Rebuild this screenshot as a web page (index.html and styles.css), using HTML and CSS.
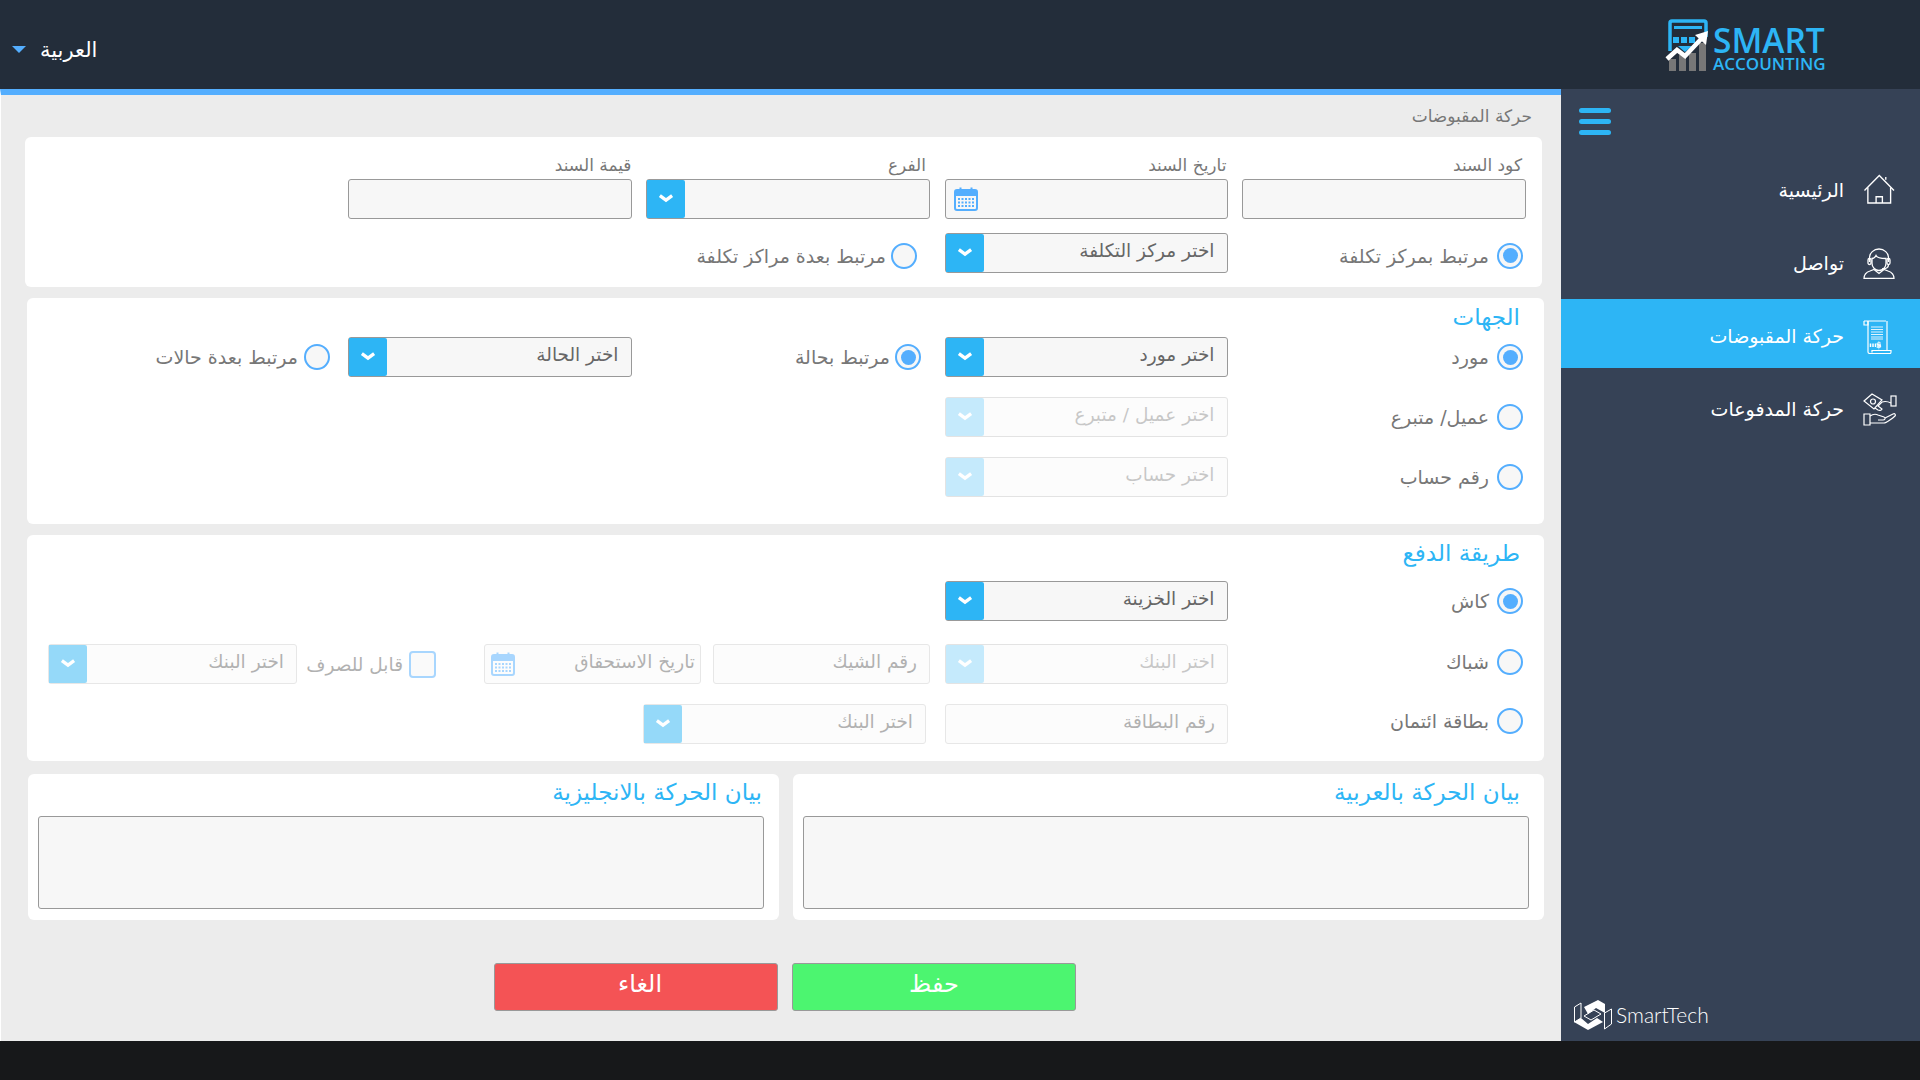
FILE: index.html
```html
<!DOCTYPE html>
<html lang="ar" dir="rtl">
<head>
  <meta charset="utf-8">
  <title>حركة المقبوضات</title>
  <link rel="stylesheet" href="styles.css">
</head>
<body>
  <header class="topbar">
    <div class="logo" dir="ltr">
      <svg class="logo-mark" width="46" height="56" viewBox="0 0 46 56">
        <path d="M6 34V6a2 2 0 0 1 2-2h32a2 2 0 0 1 2 2v14" fill="none" stroke="#2db5f5" stroke-width="3.5"/>
        <rect x="10" y="9" width="28" height="3" fill="#2db5f5"/>
        <rect x="9" y="20" width="6" height="6" fill="#2db5f5"/>
        <rect x="17" y="20" width="6" height="6" fill="#2db5f5"/>
        <rect x="25" y="20" width="6" height="6" fill="#2db5f5"/>
        <path d="M14 29h14l-7 6z" fill="#2db5f5"/>
        <rect x="5" y="42" width="7" height="12" fill="#777"/>
        <rect x="15" y="38" width="7" height="16" fill="#777"/>
        <rect x="25" y="36" width="7" height="18" fill="#777"/>
        <rect x="35" y="26" width="7" height="28" fill="#777"/>
        <path d="M3 42l10-9 8 6 18-19" fill="none" stroke="#fff" stroke-width="4.5"/>
        <path d="M31 18l13-4-2 14z" fill="#fff"/>
      </svg>
      <div class="logo-text">
        <div class="logo-smart">SMART</div>
        <div class="logo-sub">ACCOUNTING</div>
      </div>
    </div>
    <div class="lang">
      <span>العربية</span>
      <i class="caret"></i>
    </div>
  </header>

  <div class="layout">
    <aside class="sidebar">
      <div class="burger"><span></span><span></span><span></span></div>
      <nav class="menu">
        <a class="menu-item">
          <span class="menu-icon icon-home">
            <svg width="32" height="30" viewBox="13 9 32 31" fill="none" stroke="#fff" stroke-width="1.4">
              <path d="M14 26L29.3 10.500 44.500 26"/>
              <path d="M17.500 23v16h23.500V23"/>
              <path d="M26 39v-6.500h6.500V39"/>
              <path d="M36 15v-3"/>
            </svg>
          </span>
          <span class="menu-text">الرئيسية</span>
        </a>
        <a class="menu-item">
          <span class="menu-icon">
            <svg width="32" height="31" viewBox="0 0 32 31" fill="none" stroke="#fff" stroke-width="1.3">
              <path d="M9 10.500v5c0 4 3.500 7 7 7s7-3 7-7v-5c-4 0-9-1-10-3-1 2-2 3-4 3z"/>
              <path d="M6.500 14v-4a9.500 9 0 0 1 19 0v4"/>
              <rect x="5" y="10.500" width="3" height="6" rx="1.500"/>
              <rect x="24" y="10.500" width="3" height="6" rx="1.500"/>
              <path d="M25.500 16.500c0 3-3 4.500-6.500 4.500"/>
              <path d="M1 30.500c0-5 3-6.500 6-7.500l4-1.500 5 4 5-4 4 1.500c3 1 6 2.500 6 7.500z"/>
            </svg>
          </span>
          <span class="menu-text">تواصل</span>
        </a>
        <a class="menu-item active">
          <span class="menu-icon">
            <svg width="29" height="34" viewBox="0 0 29 34" fill="none" stroke="#fff" stroke-width="1.2">
              <path d="M1 1h22M1 1v4h4V1"/>
              <path d="M5 1v31c0 1 1 1.500 2 1.500h20c1 0 1-.5 1-1.500v-1.500H9v2"/>
              <path d="M24 1v29.500"/>
              <path d="M8 7h12M8 9.500h12M8 12h12M8 14.500h12M8 17h12M8 19h12" stroke="#dff3fd"/>
              <path d="M7.500 27v-3.500M10 27v-3.500M12.500 27v-3.500M15 27v-3.500M17 27v-3.500" stroke-width="1.500"/>
              <text x="18.500" y="27.500" class="dollar">$</text>
            </svg>
          </span>
          <span class="menu-text">حركة المقبوضات</span>
        </a>
        <a class="menu-item">
          <span class="menu-icon">
            <svg width="34" height="33" viewBox="0 0 34 33" fill="none" stroke="#fff" stroke-width="1.2">
              <path d="M1 8l8-7 10 6-8 9z"/>
              <circle cx="10" cy="8.500" r="2.500"/>
              <path d="M12 15l3 2c2 1 4 0 4-1l-4-3 4-4c3-1 7 0 9 1"/>
              <rect x="28" y="3" width="5" height="10"/>
              <path d="M1 21h6v11H1z"/>
              <path d="M7 23c3-2 6-2 8-1l6 2c2 1 1 3-1 3h-5"/>
              <path d="M7 30h14c2 0 9-5 11-7 1-1 0-3-2-2l-8 4"/>
            </svg>
          </span>
          <span class="menu-text">حركة المدفوعات</span>
        </a>
      </nav>
      <div class="brand" dir="ltr">
        <svg width="38" height="32" viewBox="0 0 38 32">
          <path d="M10 7L24 0l7 4v9l-9-5-8 6z" fill="#fff"/>
          <path d="M0 22l14 8 15-8-6-4-9 6-7-6z" fill="#fff"/>
          <g fill="none" stroke="#fff">
            <path d="M.5 7l6.500-4v15L.5 22z"/>
            <path d="M37.500 9v15L30.500 29V13z"/>
            <path d="M10 16l10-6 7 4-10 6z"/>
          </g>
        </svg>
        <span class="brand-name">SmartTech</span>
      </div>
    </aside>

    <main class="content">
      <div class="page-title">حركة المقبوضات</div>

      <section class="card card-doc">
        <div class="cols">
          <div class="group">
            <label class="top-label">كود السند</label>
            <input class="field" type="text">
          </div>
          <div class="group">
            <label class="top-label">تاريخ السند</label>
            <div class="field date">
              <svg class="cal" width="24" height="24" viewBox="0 0 24 24"><use href="#cal-icon"/></svg>
            </div>
          </div>
          <div class="group">
            <label class="top-label">الفرع</label>
            <div class="select"><span></span><b class="arrow"><svg width="16" height="10" viewBox="0 0 14 9"><use href="#chev"/></svg></b></div>
          </div>
          <div class="group">
            <label class="top-label">قيمة السند</label>
            <input class="field" type="text">
          </div>
        </div>
        <div class="cols row-second">
          <div class="option"><span class="radio checked"></span><span>مرتبط بمركز تكلفة</span></div>
          <div class="select"><span>اختر مركز التكلفة</span><b class="arrow"><svg width="16" height="10" viewBox="0 0 14 9"><use href="#chev"/></svg></b></div>
          <div class="option option-far"><span class="radio"></span><span>مرتبط بعدة مراكز تكلفة</span></div>
        </div>
      </section>

      <section class="card card-parties">
        <h2 class="card-title">الجهات</h2>
        <div class="stack">
          <div class="cols five">
            <div class="option"><span class="radio checked"></span><span>مورد</span></div>
            <div class="select"><span>اختر مورد</span><b class="arrow"><svg width="16" height="10" viewBox="0 0 14 9"><use href="#chev"/></svg></b></div>
            <div class="option option-mid"><span class="radio checked"></span><span>مرتبط بحالة</span></div>
            <div class="select"><span>اختر الحالة</span><b class="arrow"><svg width="16" height="10" viewBox="0 0 14 9"><use href="#chev"/></svg></b></div>
            <div class="option"><span class="radio"></span><span>مرتبط بعدة حالات</span></div>
          </div>
          <div class="cols">
            <div class="option"><span class="radio"></span><span>عميل/ متبرع</span></div>
            <div class="select off"><span>اختر عميل / متبرع</span><b class="arrow"><svg width="16" height="10" viewBox="0 0 14 9"><use href="#chev"/></svg></b></div>
          </div>
          <div class="cols">
            <div class="option"><span class="radio"></span><span>رقم حساب</span></div>
            <div class="select off"><span>اختر حساب</span><b class="arrow"><svg width="16" height="10" viewBox="0 0 14 9"><use href="#chev"/></svg></b></div>
          </div>
        </div>
      </section>

      <section class="card card-payment">
        <h2 class="card-title">طريقة الدفع</h2>
        <div class="cols">
          <div class="option"><span class="radio checked"></span><span>كاش</span></div>
          <div class="select"><span>اختر الخزينة</span><b class="arrow"><svg width="16" height="10" viewBox="0 0 14 9"><use href="#chev"/></svg></b></div>
        </div>
        <div class="pay-row pay-check">
          <div class="option"><span class="radio"></span><span>شباك</span></div>
          <div class="select off"><span>اختر البنك</span><b class="arrow"><svg width="16" height="10" viewBox="0 0 14 9"><use href="#chev"/></svg></b></div>
          <div class="field dim w-217"><span>رقم الشيك</span></div>
          <div class="field dim w-217 date"><span>تاريخ الاستحقاق</span><svg class="cal" width="24" height="24" viewBox="0 0 24 24"><use href="#cal-icon"/></svg></div>
          <div class="check-wrap"><span class="checkbox"></span><span class="check-label">قابل للصرف</span></div>
          <div class="select dim w-249"><span>اختر البنك</span><b class="arrow"><svg width="16" height="10" viewBox="0 0 14 9"><use href="#chev"/></svg></b></div>
        </div>
        <div class="pay-row pay-card">
          <div class="option"><span class="radio"></span><span>بطاقة ائتمان</span></div>
          <div class="field dim w-col"><span>رقم البطاقة</span></div>
          <div class="select dim w-col"><span>اختر البنك</span><b class="arrow"><svg width="16" height="10" viewBox="0 0 14 9"><use href="#chev"/></svg></b></div>
        </div>
      </section>

      <div class="notes">
        <section class="card note">
          <h2 class="card-title">بيان الحركة بالعربية</h2>
          <textarea class="note-box"></textarea>
        </section>
        <section class="card note">
          <h2 class="card-title">بيان الحركة بالانجليزية</h2>
          <textarea class="note-box"></textarea>
        </section>
      </div>

      <div class="actions">
        <button class="btn btn-save" type="button">حفظ</button>
        <button class="btn btn-cancel" type="button">الغاء</button>
      </div>
    </main>
  </div>

  <div class="bottom"></div>

  <svg width="0" height="0" class="defs">
    <defs>
      <path id="chev" d="M1.500 1.500L7 5.500l5.500-4" fill="none" stroke="#fff" stroke-width="3"/>
      <g id="cal-icon">
        <rect x="1" y="3" width="22" height="20" rx="2" fill="none" stroke="#54aefe" stroke-width="2"/>
        <rect x="1" y="3" width="22" height="6" fill="#54aefe"/>
        <rect x="5.500" y="0.500" width="2" height="5" fill="#54aefe"/>
        <rect x="16.500" y="0.500" width="2" height="5" fill="#54aefe"/>
        <path d="M4 12h16M4 15.500h16M4 19h16" stroke="#54aefe" stroke-width="2" stroke-dasharray="2 1.500"/>
      </g>
    </defs>
  </svg>
</body>
</html>
```

FILE: styles.css
```css
/* Page */
* {
  box-sizing: border-box;
}

body {
  margin: 0;
  height: 1080px;
  overflow: hidden;
  font-family: "DejaVu Sans", sans-serif;
  background-color: #17181a;
  color: #666;
}

.defs {
  position: absolute;
}

/* Top bar */
.topbar {
  height: 89px;
  display: flex;
  align-items: center;
  padding: 0 95px 0 12px;
  background-color: #232d3a;
}

.logo {
  display: flex;
  gap: 3px;
  align-items: flex-start;
  margin-top: -1px;
}

.logo-mark {
  margin-top: 2px;
}

.logo-text {
  font-family: "Open Sans", sans-serif;
  color: #2db5f5;
  font-weight: 600;
  width: 112px;
}

.logo-smart {
  font-size: 33.500px;
  line-height: 30px;
  margin-top: 10px;
}

.logo-sub {
  font-size: 17px;
  line-height: 17px;
}

.lang {
  margin-right: auto;
  margin-top: 10px;
  display: flex;
  align-items: center;
  gap: 14px;
  color: #fff;
  font-size: 21px;
}

.caret {
  width: 0;
  height: 0;
  border-left: 7px solid transparent;
  border-right: 7px solid transparent;
  border-top: 7px solid #54aefe;
}

/* Sidebar + main */
.layout {
  height: 952px;
  display: flex;
}

.sidebar {
  width: 359px;
  display: flex;
  flex-direction: column;
  background-color: #364256;
}

.burger {
  width: 32px;
  margin: 19px 0 18px 0;
  margin-right: 309px;
  display: flex;
  flex-direction: column;
  gap: 6px;
}

.burger span {
  height: 5px;
  border-radius: 3px;
  background-color: #2db5f5;
}

.menu {
  display: flex;
  flex-direction: column;
  gap: 4px;
}

.menu-item {
  height: 69px;
  display: flex;
  align-items: center;
  gap: 19px;
  padding-right: 23px;
  color: #fff;
  font-size: 19px;
}

.menu-item.active {
  background-color: #2db5f5;
}

.menu-text {
  padding-top: 5px;
}

.menu-icon {
  width: 34px;
  display: flex;
  justify-content: flex-end;
  margin-top: 6px;
}

.icon-home {
  margin-top: 2px;
}

.dollar {
  font-size: 9px;
  fill: #fff;
  stroke: none;
}

.brand {
  margin-top: auto;
  display: flex;
  align-items: center;
  gap: 4px;
  padding: 0 0 9px 13px;
  color: #fff;
  font-family: "Lato", sans-serif;
  font-weight: 300;
  font-size: 21px;
}

.brand-name {
  padding-bottom: 3px;
}

.content {
  width: 1561px;
  border-top: 6px solid #54aefe;
  border-left: 1px solid #fff;
  background-color: #ececec;
}

.page-title {
  height: 42px;
  line-height: 42px;
  padding-right: 29px;
  font-size: 17px;
  color: #777;
}

/* Cards */
.card {
  background-color: #fff;
  border-radius: 6px;
}

.card-title {
  margin: 0;
  font-weight: normal;
  font-size: 23px;
  color: #2db5f5;
}

.card-doc {
  height: 150px;
  margin: 0 19px 11px 24px;
  padding: 16px 16px 0 0;
}

.card-parties {
  height: 226px;
  margin: 0 17px 11px 26px;
  padding: 0 18px 0 0;
}

.card-parties .card-title {
  height: 39px;
  line-height: 38px;
  padding-right: 6px;
}

.card-payment {
  height: 226px;
  margin: 0 17px 13px 26px;
  padding: 0 18px 0 0;
}

.card-payment .card-title {
  height: 46px;
  line-height: 36px;
  padding-right: 6px;
}

/* Field rows */
.cols {
  display: grid;
  grid-template-columns: 284px 283px 284px 284px;
  column-gap: 14.500px;
  align-items: center;
}

.cols.five {
  grid-template-columns: 284px 283px 284px 284px auto;
}

.row-second {
  margin-top: 14px;
}

.row-second .option {
  padding-top: 5px;
}

.stack {
  display: flex;
  flex-direction: column;
  gap: 20px;
}

.top-label {
  display: block;
  height: 26px;
  padding: 0 4px;
  font-size: 17px;
  line-height: 24px;
  color: #777;
}

.group:nth-child(2) .top-label {
  padding-right: 1px;
}

.group:nth-child(4) .top-label {
  padding-right: 0;
}

.field,
.select {
  height: 40px;
  display: flex;
  align-items: center;
  width: 100%;
  border: 1px solid #999;
  border-radius: 3px;
  background-color: #f7f7f7;
  font-family: inherit;
  font-size: 18.500px;
  color: #666;
}

.select > span:first-child,
.field > span {
  padding: 0 12px 5px;
}

.arrow {
  width: 38px;
  height: 100%;
  margin-right: auto;
  display: flex;
  align-items: center;
  justify-content: center;
  background-color: #2db5f5;
  border-radius: 0 2px 2px 0;
}

.date .cal {
  margin-right: auto;
  margin-left: 8px;
}

.dim.date .cal {
  margin-left: 6px;
}

.dim.date > span {
  padding-right: 5px;
}

/* disabled look, two strengths as on the form */
.select.off {
  opacity: 0.27;
}

.dim {
  border-color: #d0d0d0;
  opacity: 0.5;
  background-color: #fafafa;
}

.select.off span {
  color: #333;
}

.option {
  display: flex;
  align-items: center;
  gap: 8px;
  padding-right: 3px;
  font-size: 19px;
  color: #777;
  white-space: nowrap;
}

.option-far {
  padding-right: 13px;
  gap: 5px;
}

.option-mid {
  padding-right: 9px;
  gap: 5px;
}

.cols.five .option:last-child {
  gap: 6px;
}

.radio {
  width: 26px;
  height: 26px;
  flex: none;
  display: flex;
  align-items: center;
  justify-content: center;
  border: 2.500px solid #54aefe;
  border-radius: 50%;
  background-color: #f7f7f7;
}

.radio.checked::after {
  content: "";
  width: 15px;
  height: 15px;
  border-radius: 50%;
  background-color: #54aefe;
}

/* Payment rows */
.pay-row {
  display: flex;
  align-items: center;
}

.pay-row .option {
  width: 284px;
  flex: none;
  margin-left: 14px;
}

.pay-row > .select.off {
  width: 283px;
  flex: none;
  margin-left: 15px;
}

.pay-check {
  margin-top: 23px;
}

.pay-check .option {
  padding-bottom: 5px;
}

.pay-card {
  margin-top: 20px;
}

.pay-card .option {
  padding-bottom: 6px;
}

.w-217 {
  width: 217px;
  flex: none;
  margin-left: 12px;
}

.pay-check .date {
  margin-left: 48px;
}

.w-col {
  width: 283px;
  flex: none;
}

.pay-card .field {
  margin-left: 19px;
}

.w-249 {
  width: 249px;
  flex: none;
}

.check-wrap {
  width: 139px;
  flex: none;
  display: flex;
  align-items: center;
  gap: 6px;
  opacity: 0.5;
  font-size: 18.500px;
  white-space: nowrap;
}

.checkbox {
  width: 27px;
  height: 27px;
  flex: none;
  border: 2.500px solid #54aefe;
  border-radius: 4px;
  background-color: #f7f7f7;
}

/* Notes */
.notes {
  display: flex;
  gap: 14px;
  margin: 0 17px 0 27px;
}

.note {
  flex: 1;
  height: 146px;
  padding: 0 15px 0 10px;
}

.note .card-title {
  height: 42px;
  line-height: 36px;
  padding-right: 9px;
}

.note:last-child .card-title {
  padding-right: 2px;
}

.note-box {
  display: block;
  width: 100%;
  height: 93px;
  border: 1px solid #999;
  border-radius: 3px;
  background-color: #f7f7f7;
  resize: none;
}

/* Buttons */
.actions {
  display: flex;
  gap: 14px;
  margin-top: 43px;
  padding-right: 485px;
}

.btn {
  width: 284px;
  height: 48px;
  border: 1px solid #999;
  border-radius: 3px;
  color: #fff;
  font-family: inherit;
  font-size: 24px;
  padding: 0 0 6px;
}

.btn-save {
  background-color: #4cf570;
}

.btn-cancel {
  background-color: #f45355;
  padding-left: 8px;
}

.bottom {
  height: 39px;
  background-color: #17181a;
}
```
